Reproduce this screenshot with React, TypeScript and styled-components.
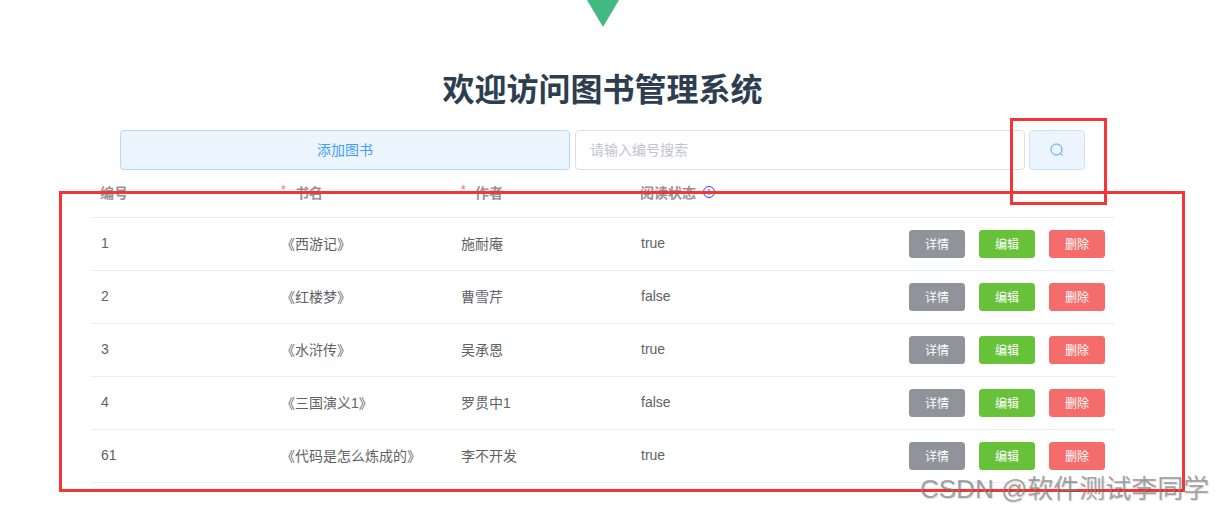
import React from 'react';
import styled, {createGlobalStyle} from "styled-components";

const GlobalStyle = createGlobalStyle`
    body {
      margin: 0;
      background-color: white;
      font-family: "Liberation Sans", "Noto Sans CJK SC", sans-serif;
      overflow: hidden;
    }
`;

const Page = styled.div`
    position: relative;
    width: 1206px;
    height: 512px;
    display: flex;
    flex-direction: column;
    align-items: center;
`;

const Logo = styled.svg`
    display: block;
    width: 32px;
    height: 27px;
`;

const Title = styled.h1`
    margin: 45px 1px 0 0;
    height: 58px;
    line-height: 36px;
    font-size: 32px;
    font-weight: 700;
    color: #2c3e50;
`;

const Toolbar = styled.div`
    display: flex;
    width: 965px;
    height: 40px;
    margin-right: 1px;
`;

const AddButton = styled.button`
    width: 450px;
    height: 40px;
    box-sizing: border-box;
    background-color: #ecf5ff;
    border: 1px solid #b3d8ff;
    border-radius: 4px;
    color: #409eff;
    font-family: inherit;
    font-size: 14px;
    padding: 0 0 2px;
`;

const SearchInput = styled.input`
    width: 450px;
    height: 40px;
    box-sizing: border-box;
    margin-left: 5px;
    padding: 0 14px;
    background-color: white;
    border: 1px solid #dcdfe6;
    border-radius: 4px;
    font-family: inherit;
    font-size: 14px;
    &::placeholder {
      color: #c0c4cc;
      opacity: 1;
    }
`;

const SearchButton = styled.button`
    width: 56px;
    height: 40px;
    box-sizing: border-box;
    margin-left: 4px;
    padding: 0;
    background-color: #ecf5ff;
    border: 1px solid #c6e2ff;
    border-radius: 4px;
    display: flex;
    align-items: center;
    justify-content: center;
`;

const Table = styled.div`
    width: 1024px;
    display: flex;
    flex-direction: column;
`;

const Row = styled.div<{ $header?: boolean }>`
    display: grid;
    grid-template-columns: 180px 180px 180px 180px 1fr;
    box-sizing: border-box;
    height: ${props => (props.$header ? "48px" : "53px")};
    align-items: center;
    border-bottom: 1px solid #ebeef5;
    font-size: 14px;
    color: ${props => (props.$header ? "#909399" : "#606266")};
    font-weight: ${props => (props.$header ? 700 : 400)};
`;

const Cell = styled.div<{ $header?: boolean }>`
    padding: 0 ${props => (props.$header ? "9px 4px" : "10px 2px")};
    display: flex;
    align-items: center;
`;

const Star = styled.span`
    color: #f56c6c;
    font-size: 12px;
    font-weight: 400;
    width: 15px;
    margin-left: 1px;
    margin-right: -1px;
    margin-top: -4px;
`;

const InfoIcon = styled.svg`
    width: 12px;
    height: 12px;
    margin-left: 7px;
`;

const Actions = styled.div`
    display: flex;
    justify-content: flex-end;
    gap: 14px;
    padding-right: 10px;
`;

const ActionButton = styled.button<{ $color: string }>`
    width: 56px;
    height: 28px;
    padding: 0 0 2px;
    border: 1px solid ${props => props.$color};
    border-radius: 3px;
    background-color: ${props => props.$color};
    color: white;
    font-family: inherit;
    font-size: 12px;
`;

const Annotation = styled.div<{ $left: number; $top: number; $width: number; $height: number }>`
    position: absolute;
    left: ${props => props.$left}px;
    top: ${props => props.$top}px;
    width: ${props => props.$width}px;
    height: ${props => props.$height}px;
    box-sizing: border-box;
    border: 3px solid #f53535;
    pointer-events: none;
`;

const Watermark = styled.div`
    position: absolute;
    left: 920px;
    top: 474px;
    font-size: 26px;
    line-height: 30px;
    white-space: nowrap;
    color: rgba(130, 130, 130, 0.7);
    text-shadow: 1px 1px 1px rgba(0, 0, 0, 0.15);
`;

const books = [
  { id: "1", name: "《西游记》", author: "施耐庵", read: "true" },
  { id: "2", name: "《红楼梦》", author: "曹雪芹", read: "false" },
  { id: "3", name: "《水浒传》", author: "吴承恩", read: "true" },
  { id: "4", name: "《三国演义1》", author: "罗贯中1", read: "false" },
  { id: "61", name: "《代码是怎么炼成的》", author: "李不开发", read: "true" },
];

function App() {
  return (
      <>
          <GlobalStyle/>
          <Page>
              <Logo viewBox="0 0 32 27">
                  <polygon points="0,0 32,0 16,27" fill="#42b983"/>
              </Logo>
              <Title>欢迎访问图书管理系统</Title>
              <Toolbar>
                  <AddButton>添加图书</AddButton>
                  <SearchInput placeholder="请输入编号搜索"/>
                  <SearchButton>
                      <svg width="14" height="14" viewBox="0 0 14 14" fill="none" stroke="#409eff" strokeWidth="1">
                          <circle cx="6.5" cy="6.5" r="5.5"/>
                          <path d="M10.5 10.5 L12.5 12.5"/>
                      </svg>
                  </SearchButton>
              </Toolbar>
              <Table>
                  <Row $header>
                      <Cell $header>编号</Cell>
                      <Cell $header><Star>*</Star>书名</Cell>
                      <Cell $header><Star>*</Star>作者</Cell>
                      <Cell $header>
                          阅读状态
                          <InfoIcon viewBox="0 0 12 12" fill="none" stroke="#3a3ae8" strokeWidth="1">
                              <circle cx="6" cy="6" r="5.5"/>
                              <path d="M6 3 V7 M6 8.2 V9.2"/>
                          </InfoIcon>
                      </Cell>
                      <Cell/>
                  </Row>
                  {books.map(book => (
                      <Row key={book.id}>
                          <Cell>{book.id}</Cell>
                          <Cell>{book.name}</Cell>
                          <Cell>{book.author}</Cell>
                          <Cell>{book.read}</Cell>
                          <Actions>
                              <ActionButton $color="#909399">详情</ActionButton>
                              <ActionButton $color="#67c23a">编辑</ActionButton>
                              <ActionButton $color="#f56c6c">删除</ActionButton>
                          </Actions>
                      </Row>
                  ))}
              </Table>
              <Annotation $left={1010} $top={118} $width={97} $height={87}/>
              <Annotation $left={59} $top={191} $width={1126} $height={301}/>
              <Watermark>CSDN @软件测试李同学</Watermark>
          </Page>
      </>
  );
}

export default App;
